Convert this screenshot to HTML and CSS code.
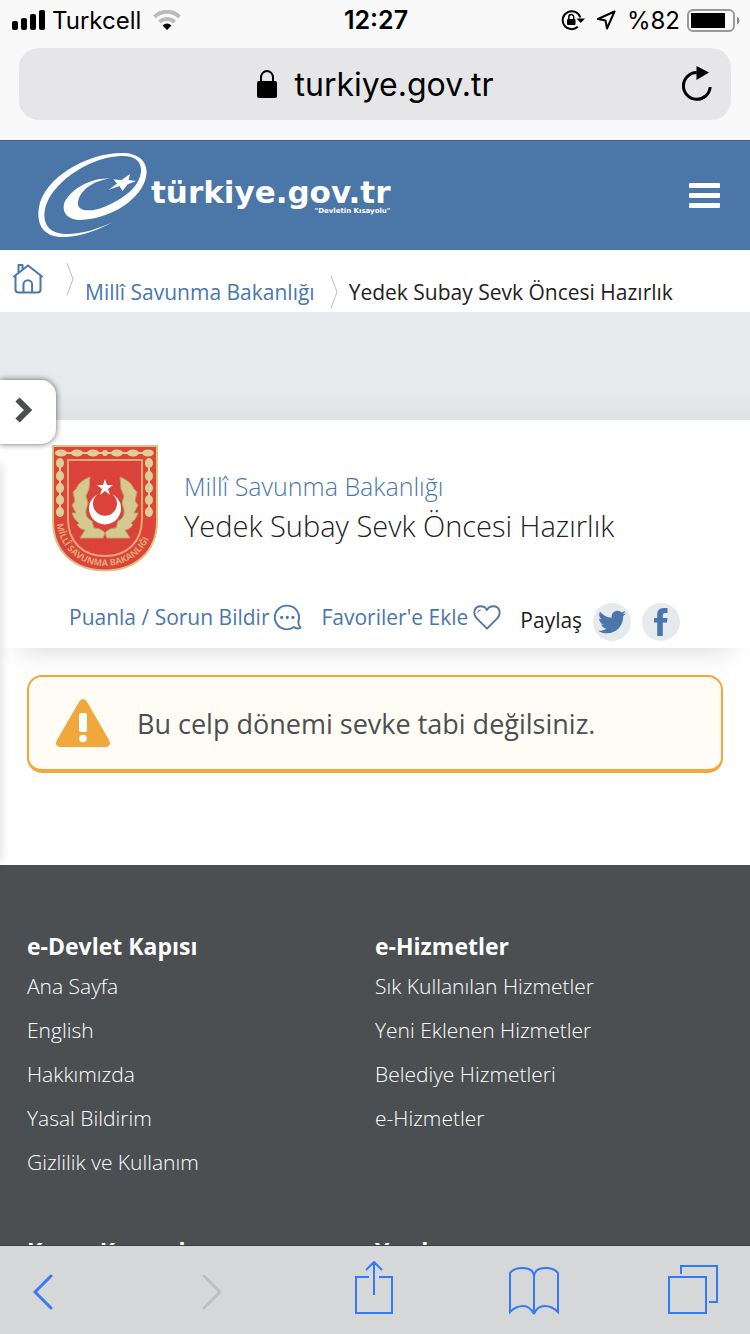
FILE: index.html
```
<!DOCTYPE html>
<html lang="tr">
<head>
    <meta charset="UTF-8">
    <meta name="viewport" content="width=device-width, initial-scale=1.0">
    <title>Yedek Subay Sevk Öncesi Hazırlık</title>
    <link rel="stylesheet" href="styles.css">
</head>
<body>
    <div class="browser-top">
        <div class="status-bar">
            <div class="status-left">
                <svg width="34" height="20" viewBox="0 0 34 20"><rect x="0" y="11" width="6" height="9" rx="2"/><rect x="9" y="8" width="6" height="12" rx="2"/><rect x="18" y="4" width="6" height="16" rx="2"/><rect x="27" y="0" width="6" height="20" rx="2"/></svg>
                <span class="carrier">Turkcell</span>
                <svg width="28" height="20" viewBox="0 0 28 20"><path d="M1.500 7C8.500 0 19.500 0 26.500 7M6.500 12C10.500 8 17.500 8 21.500 12" fill="none" stroke="#bbb" stroke-width="4"/><path d="M9.500 15.500Q14 11.500 18.500 15.500L14 20Z"/></svg>
            </div>
            <span class="clock">12:27</span>
            <div class="status-right">
                <svg width="24" height="22" viewBox="0 0 24 22"><path d="M16.800 17.800A9 9 0 1 1 19.300 8.500" fill="none" stroke="#000" stroke-width="2"/><path d="M15.500 9.500H24L19.800 14Z"/><rect x="6" y="10" width="8.500" height="6" rx="1"/><path d="M7.800 10V8a2.400 2.400 0 0 1 4.900 0v2" fill="none" stroke="#000" stroke-width="1.500"/></svg>
                <svg width="20" height="20" viewBox="0 0 20 20"><path d="M18.500 1.500L2 9L9.500 10.500L11 18.500Z" fill="none" stroke="#000" stroke-width="2" stroke-linejoin="round"/></svg>
                <span>%82</span>
                <svg width="54" height="24" viewBox="0 0 54 24"><rect x="2" y="2" width="46" height="21" rx="5" fill="none" stroke="#999" stroke-width="2"/><rect x="5" y="5" width="34" height="15"/><path d="M51 8.500Q53.500 10 53.500 12.500T51 16.500Z" fill="#888"/></svg>
            </div>
        </div>
        <div class="address-bar">
            <svg width="20" height="28" viewBox="0 0 20 28"><rect x="0" y="11" width="20" height="17" rx="2"/><path d="M4 12V7.500a6 6.500 0 0 1 12 0V12" fill="none" stroke="#000" stroke-width="2"/></svg>
            <span class="url">turkiye.gov.tr</span>
            <button type="button" class="reload" aria-label="Yenile">
                <svg width="32" height="36" viewBox="0 0 32 36"><path d="M29.200 22A13.400 13.400 0 1 1 15.800 7.500" fill="none" stroke="#000" stroke-width="3"/><path d="M15.500 1L28 7.500L15.500 15Z"/></svg>
            </button>
        </div>
    </div>

    <div class="page">
        <header class="site-header">
            <a href="#" class="logo">
                <svg class="logo-mark" width="112" height="90" viewBox="36 150 112 90"><path d="M113 221C95 231 75 237 60 236C43 235 36 223 39 206C44 178 85 152 122 152C141 152 149 163 146 176C142 197 112 218 80 219C68 219 62 212 64 203C68 190 90 176 110 177.500C92 180 79 190 78 202C77 211 92 211 104 206C124 198 139 186 141 171C142 159 133 154 120 155C86 157 50 184 45 208C42 224 50 233 67 233C82 233 98 228 113 221Z"/><path d="M130 173L128.500 179L136 180L127.500 183.500L122.500 190L119.500 185L108.500 189L117 182.500L113.500 178.500L121.500 179Z"/></svg>
                <span class="logo-text">
                    <span class="logo-name">türkiye.gov.tr</span>
                    <span class="logo-slogan">"Devletin Kısayolu"</span>
                </span>
            </a>
            <button type="button" class="menu-btn" aria-label="Menü"><span></span><span></span><span></span></button>
        </header>

        <nav class="breadcrumb">
            <a href="#" class="home" aria-label="Ana Sayfa">
                <svg width="30" height="32" viewBox="0 0 30 32"><path d="M1 13.500L15 2.500L29 13.500M2.500 12.500V26.500Q2.500 29.500 5.500 29.500H24.500Q27.500 29.500 27.500 26.500V12.500M5.500 9.500V2H9.500V6.500M10.500 29V21.500a4.300 4.300 0 0 1 8.600 0V29"/></svg>
            </a>
            <svg class="sep" width="8" height="32" viewBox="0 0 8 32"><path d="M1 0L7 16L1 32"/></svg>
            <a href="#" class="crumb">Millî Savunma Bakanlığı</a>
            <svg class="sep sep-low" width="8" height="32" viewBox="0 0 8 32"><path d="M1 0L7 16L1 32"/></svg>
            <span class="crumb">Yedek Subay Sevk Öncesi Hazırlık</span>
        </nav>

        <main>
            <button type="button" class="side-tab" aria-label="Menüyü aç">
                <svg width="18" height="26" viewBox="0 0 18 26"><path d="M2.500 2.500L13 13L2.500 23.500" fill="none" stroke="#4b4f52" stroke-width="6"/></svg>
            </button>
            <div class="banner"></div>

            <section class="service">
                <div class="service-title">
                    <svg class="emblem" width="106" height="127" viewBox="0 0 106 127">
                        <path d="M1 1H105V76C105 108 82 125.500 53 125.500C24 125.500 1 108 1 76Z" fill="#dc443b" stroke="#d8c384" stroke-width="2"/>
                        <path d="M16 15H90V74C90 98 74 111 53 111C32 111 16 98 16 74Z" fill="#db423a" stroke="#e3a873" stroke-width="2"/>
                        <g fill="#dccf94">
                            <ellipse cx="9" cy="8" rx="6" ry="3.500"/><ellipse cx="25" cy="8" rx="6" ry="3.500"/><ellipse cx="41" cy="8" rx="6" ry="3.500"/><circle cx="53" cy="8" r="3"/><ellipse cx="65" cy="8" rx="6" ry="3.500"/><ellipse cx="81" cy="8" rx="6" ry="3.500"/><ellipse cx="96" cy="8" rx="6" ry="3.500"/>
                            <ellipse cx="8" cy="18" rx="4" ry="5"/><ellipse cx="8" cy="31" rx="4" ry="5"/><ellipse cx="8" cy="43" rx="4" ry="5"/><ellipse cx="8" cy="55" rx="4" ry="5"/><ellipse cx="8" cy="67" rx="4" ry="5"/>
                            <ellipse cx="97" cy="18" rx="4" ry="5"/><ellipse cx="97" cy="31" rx="4" ry="5"/><ellipse cx="97" cy="43" rx="4" ry="5"/><ellipse cx="97" cy="55" rx="4" ry="5"/><ellipse cx="97" cy="67" rx="4" ry="5"/>
                        </g>
                        <path d="M8 14V72M97 14V72M8 8H98" stroke="#dccf94" stroke-width="2"/>
                        <path id="leaves" d="M38 32Q27 36 24 44L21 47L23 56L20 60L24 68L20 68Q22 75 27 78L25 80Q29 85 33 85L28 93H51L53 88Q49 83 42 83L40 76Q33 73 34 65L36 58L34 51L37 44Z" fill="#d5c98f" stroke="#b9a064"/>
                        <use href="#leaves" transform="matrix(-1 0 0 1 106 0)"/>
                        <path d="M46 49A16 16 0 1 0 60 49A12 12 0 1 1 46 49Z" fill="#fff"/>
                        <path d="M53 34L55 40L61 40L56 44L58 50L53 46L48 50L50 44L45 40L51 40Z" fill="#fff"/>
                        <path id="motto" d="M5 79C8 105 29 121 53 121C77 121 98 105 101 79" fill="none"/>
                        <text class="motto"><textPath href="#motto">MİLLÎ SAVUNMA BAKANLIĞI</textPath></text>
                    </svg>
                    <h1><a href="#">Millî Savunma Bakanlığı</a>Yedek Subay Sevk Öncesi Hazırlık</h1>
                </div>
                <div class="actions">
                    <a href="#">Puanla / Sorun Bildir
                        <svg width="28" height="27" viewBox="0 0 30 28" class="line-icon"><path d="M21.500 24.200A13 12.700 0 1 1 26 18.500Q26 22 28.500 25Q24.500 27 21.500 24.200Z"/><path d="M8 14h.5M14 14h.5M20 14h.5" stroke-width="3"/></svg>
                    </a>
                    <a href="#">Favoriler'e Ekle
                        <svg width="28" height="27" viewBox="0 0 30 28" class="line-icon"><path d="M15 26L4 15C-1 9 2 2 8 2C12 2 14 4 15 6C16 4 18 2 22 2C28 2 31 9 26 15Z"/><path d="M5 9Q5 6 8 6" stroke-width="1"/></svg>
                    </a>
                    <div class="share">
                        <span>Paylaş</span>
                        <a href="#" class="round" aria-label="Twitter"><svg width="28" height="28" viewBox="0 0 512 512"><path d="M459.370 151.716c.325 4.548.325 9.097.325 13.645 0 138.720-105.583 298.558-298.558 298.558-59.452 0-114.680-17.219-161.137-47.106 8.447.974 16.568 1.299 25.340 1.299 49.055 0 94.213-16.568 130.274-44.832-46.132-.975-84.792-31.188-98.112-72.772 6.498.974 12.995 1.624 19.818 1.624 9.421 0 18.843-1.300 27.614-3.573-48.081-9.747-84.143-51.980-84.143-102.985v-1.299c13.969 7.797 30.214 12.670 47.431 13.319-28.264-18.843-46.781-51.005-46.781-87.391 0-19.492 5.197-37.360 14.294-52.954 51.655 63.675 129.300 105.258 216.365 109.807-1.624-7.797-2.599-15.918-2.599-24.040 0-57.828 46.782-104.934 104.934-104.934 30.213 0 57.502 12.670 76.670 33.137 23.715-4.548 46.456-13.320 66.599-25.340-7.798 24.366-24.366 44.833-46.132 57.827 21.117-2.273 41.584-8.122 60.426-16.243-14.292 20.791-32.161 39.308-52.628 54.253z"/></svg></a>
                        <a href="#" class="round" aria-label="Facebook"><svg width="14" height="28" viewBox="0 0 14 28"><path d="M13.500 0V5H11Q8.800 5 8.800 7V10H13.500L13 14.500H8.800V28H3.200V14.500H0V10H3.200V6.500Q3.200 0 9.500 0Z"/></svg></a>
                    </div>
                </div>
            </section>

            <div class="alert" role="alert">
                <svg width="54" height="48" viewBox="0 0 54 48"><path d="M23.500 2Q27 -2 30.500 2L53 41Q56 47 50 48H4Q-2 47 1 41Z" fill="#f0a83c"/><rect x="23" y="14" width="8" height="19" rx="2" fill="#fff"/><circle cx="27" cy="39.500" r="3.800" fill="#fff"/></svg>
                <p>Bu celp dönemi sevke tabi değilsiniz.</p>
            </div>
        </main>

        <footer>
            <div>
                <h2>e-Devlet Kapısı</h2>
                <ul>
                    <li><a href="#">Ana Sayfa</a></li>
                    <li><a href="#">English</a></li>
                    <li><a href="#">Hakkımızda</a></li>
                    <li><a href="#">Yasal Bildirim</a></li>
                    <li><a href="#">Gizlilik ve Kullanım</a></li>
                </ul>
            </div>
            <div>
                <h2>e-Hizmetler</h2>
                <ul>
                    <li><a href="#">Sık Kullanılan Hizmetler</a></li>
                    <li><a href="#">Yeni Eklenen Hizmetler</a></li>
                    <li><a href="#">Belediye Hizmetleri</a></li>
                    <li><a href="#">e-Hizmetler</a></li>
                </ul>
            </div>
            <h2>Kamu Kurumları</h2>
            <h2>Yardım</h2>
        </footer>
    </div>

    <div class="toolbar">
        <div class="history">
            <button type="button" aria-label="Geri"><svg width="20" height="36" viewBox="0 0 20 36"><path d="M18 2L2 18L18 34" stroke-width="3" stroke-linecap="round"/></svg></button>
            <button type="button" aria-label="İleri" disabled><svg width="20" height="36" viewBox="0 0 20 36"><path d="M2 2L18 18L2 34" stroke-width="3" stroke-linecap="round"/></svg></button>
        </div>
        <div class="tools">
            <button type="button" aria-label="Paylaş"><svg width="38" height="54" viewBox="0 0 38 54"><path d="M14 16H1V52H37V16H24M19 34V2M11 9L19 1L27 9"/></svg></button>
            <button type="button" aria-label="Yer imleri"><svg width="52" height="50" viewBox="0 0 52 50"><path d="M26 49Q22 41 15 41Q8 41 2 47V8Q6 3 14 3Q26 3 26 12V49Q29 41 37 41Q44 41 50 47V8Q46 3 38 3Q26 3 26 12"/></svg></button>
            <button type="button" aria-label="Sekmeler"><svg width="50" height="50" viewBox="0 0 50 50"><path d="M1 12H38V48H1ZM13 9V1H49V37H41"/></svg></button>
        </div>
    </div>
</body>
</html>
```
FILE: styles.css
```
* {
    box-sizing: border-box;
}

body {
    margin: 0;
    height: 100vh;
    display: flex;
    flex-direction: column;
    overflow: hidden;
    font-family: "Open Sans", sans-serif;
    color: #222;
    background: #fff;
}

a {
    color: #4a77ab;
    text-decoration: none;
}

button {
    padding: 0;
    border: none;
    background: none;
    cursor: pointer;
}

svg {
    display: block;
    flex-shrink: 0;
}

/* browser */
.browser-top {
    padding-bottom: 20px;
    background: #f9f9f9;
    border-bottom: 1px solid #3f5f86;
    font-family: Inter, sans-serif;
    color: #000;
}

.status-bar {
    display: grid;
    grid-template-columns: 1fr auto 1fr;
    align-items: center;
    height: 40px;
    padding: 0 10px 0 12px;
    font-size: 24px;
}

.status-left,
.status-right {
    display: flex;
    align-items: center;
    gap: 12px;
}

.status-left .carrier {
    margin-left: -6px;
}

.status-right {
    justify-content: flex-end;
    gap: 11px;
}

.status-right span {
    margin-right: -5px;
}

.clock {
    font-size: 25px;
    font-weight: 600;
}

.address-bar {
    position: relative;
    display: flex;
    justify-content: center;
    align-items: center;
    gap: 18px;
    height: 72px;
    margin: 8px 19px 0;
    border-radius: 20px;
    background: #e6e6e8;
    font-size: 32px;
}

.reload {
    position: absolute;
    right: 18px;
    top: 17px;
}

.page {
    flex: 1;
    min-height: 0;
    overflow: hidden;
}

/* header */
.site-header {
    display: flex;
    justify-content: space-between;
    align-items: center;
    height: 109px;
    padding: 0 30px 0 36px;
    background: #4a76a8;
}

.logo {
    display: flex;
    align-items: center;
    color: #fff;
    font-family: "DejaVu Sans", sans-serif;
    font-weight: bold;
}

.logo-mark {
    fill: #fff;
}

.logo-text {
    display: flex;
    flex-direction: column;
    align-items: flex-end;
    padding-left: 3px;
}

.logo-name {
    font-size: 31px;
    line-height: 30px;
}

.logo-slogan {
    font-size: 7px;
    line-height: 8px;
}

.menu-btn {
    display: flex;
    flex-direction: column;
    gap: 5px;
}

.menu-btn span {
    width: 31px;
    height: 5px;
    border-radius: 1px;
    background: #fff;
}

/* breadcrumb */
.breadcrumb {
    display: flex;
    align-items: flex-start;
    height: 62px;
    padding: 13px 13px 0;
    font-size: 21px;
}

.home svg,
.line-icon {
    fill: none;
    stroke: #4a77ab;
    stroke-width: 2;
    stroke-linejoin: round;
    stroke-linecap: round;
}

.sep {
    margin: 0 11px 0 15px;
    fill: none;
    stroke: #bbb;
}

.home + .sep {
    margin-left: 23px;
}

.sep-low {
    margin-top: 13px;
}

.crumb {
    padding-top: 14px;
    line-height: 30px;
}

/* content */
main {
    position: relative;
    height: 553px;
}

/* edge of the closed side menu */
main::before {
    content: "";
    position: absolute;
    left: -4px;
    top: 152px;
    bottom: 4px;
    z-index: 1;
    width: 4px;
    box-shadow: 0 0 10px rgba(0, 0, 0, 0.25);
}

.side-tab {
    position: absolute;
    left: 0;
    top: 68px;
    z-index: 2;
    width: 56px;
    height: 64px;
    padding: 0 15px 4px;
    border-radius: 0 15px 15px 0;
    background: #fff;
    box-shadow: 0 0 6px rgba(0, 0, 0, 0.6);
}

.banner {
    height: 108px;
    background: linear-gradient(#e6eaed 75%, #dee2e5);
}

.service {
    height: 228px;
    padding-top: 25px;
    background: #fff;
    box-shadow: 0 22px 26px -20px rgba(0, 0, 0, 0.16);
}

.service-title {
    display: flex;
    align-items: center;
    gap: 26px;
    padding-left: 52px;
}

.motto {
    font: bold 9px "Open Sans", sans-serif;
    fill: #e3a873;
}

h1 {
    margin: 0;
    padding-bottom: 6px;
    font-size: 29px;
    font-weight: 300;
    line-height: 39px;
}

h1 a {
    display: block;
    font-size: 25px;
}

.actions {
    display: flex;
    align-items: flex-start;
    gap: 19px;
    padding: 28px 0 0 69px;
    font-size: 21px;
    line-height: 35px;
}

.actions a {
    display: flex;
    align-items: center;
    gap: 5px;
}

.share {
    display: flex;
    gap: 11px;
    padding-top: 3px;
}

.actions .round {
    justify-content: center;
    width: 38px;
    height: 38px;
    border-radius: 50%;
    background: #e6eaed;
}

.round svg {
    fill: #4a77ab;
}

.alert {
    display: flex;
    align-items: center;
    gap: 27px;
    height: 98px;
    margin: 27px 27px 0;
    padding-left: 27px;
    border: 2px solid #f0a83c;
    border-bottom-width: 4px;
    border-radius: 15px;
    background: #fffcf5;
    color: #4b4f52;
    font-size: 27px;
}

.alert p {
    margin: 0;
}

/* footer */
footer {
    display: grid;
    grid-template-columns: 1fr 1fr;
    row-gap: 50px;
    padding: 64px 27px 40px;
    background: #4b4f51;
    color: #fff;
    font-size: 21px;
}

footer h2 {
    margin: 0;
    font-size: 23px;
    line-height: 35px;
}

footer ul {
    margin: 0;
    padding: 0;
    list-style: none;
    font-weight: 300;
    line-height: 44px;
}

footer a {
    color: #fff;
}

/* bottom toolbar */
.toolbar {
    display: flex;
    align-items: center;
    height: 89px;
    padding: 4px 31px 0 33px;
    border-top: 1px solid #3c3f41;
    background: #d6d7d8;
}

.toolbar svg {
    margin: 0 auto;
    fill: none;
    stroke: #337af6;
    stroke-width: 2;
}

.toolbar button:disabled svg {
    stroke: #bfbfc1;
}

.history {
    display: flex;
    gap: 149px;
}

.tools {
    flex: 1;
    display: flex;
    justify-content: space-between;
    align-items: flex-end;
    margin: 0 0 8px 126px;
}

.tools button {
    width: 52px;
}
```
